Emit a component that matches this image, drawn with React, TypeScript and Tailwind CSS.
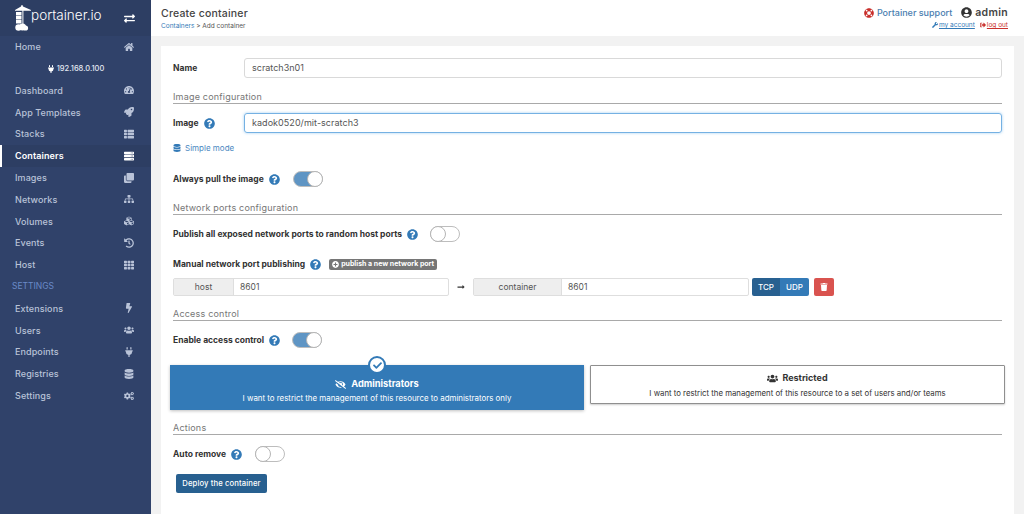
import type { ReactNode } from 'react';
import {
  FaBolt, FaCheck, FaClone, FaCogs, FaCubes, FaDatabase, FaEyeSlash, FaExchangeAlt, FaHistory, FaHome,
  FaLifeRing, FaLongArrowAltRight, FaPlug, FaPlusCircle, FaQuestionCircle, FaRocket, FaServer, FaSignOutAlt,
  FaSitemap, FaTachometerAlt, FaTh, FaThList, FaTrash, FaUserCircle, FaUsers, FaWrench,
} from 'react-icons/fa';

const font = 'font-["Inter","Liberation_Sans",sans-serif]';

function NavItem({ label, icon, active = false }: { label: string; icon: ReactNode; active?: boolean }) {
  return (
    <div
      className={`flex h-[21.8px] items-center justify-between pr-[16px] text-[9px] tracking-[0.1px] ${
        active ? 'border-l-2 border-white bg-[#2d3e63] pl-[13px] font-semibold text-white' : 'pl-[15px] font-medium text-[#b9c3d8]'
      }`}
    >
      <span>{label}</span>
      <span className="flex w-[12px] justify-center text-[10px]">{icon}</span>
    </div>
  );
}

function Sidebar() {
  return (
    <aside className="flex w-[151px] shrink-0 flex-col bg-[#30426a]">
      <div className="flex h-[36px] items-center justify-between bg-[#2d3e63] pl-[15px] pr-[16px] text-white">
        <div className="flex items-center">
          <svg width="16" height="26" viewBox="0 0 16 26" fill="#fff">
            <path d="M0 5 L6 1.5 L6.6 0 L7.4 0 L8 1.5 L16 5 L16 5.8 L8.4 5.8 L8.4 19 L7.4 19 L7.4 5.8 L0 5.8Z" />
            <rect x="1" y="7" width="5.5" height="3.5" />
            <rect x="1" y="11" width="5.5" height="3.5" />
            <rect x="1" y="15" width="5.5" height="3.5" />
            <circle cx="3.5" cy="22.5" r="3.2" />
            <circle cx="7.5" cy="22" r="3.6" />
            <circle cx="10.5" cy="23" r="2.6" />
          </svg>
          <span className="mb-[4px] text-[13.5px] font-light leading-none">portainer.io</span>
        </div>
        <FaExchangeAlt className="text-[11px]" />
      </div>
      <NavItem label="Home" icon={<FaHome />} />
      <div className="flex h-[21.8px] items-center justify-center text-[7.5px] font-medium text-[#e3e8f1]">
        <FaPlug className="mr-[2px] text-[8px] text-white" />
        192.168.0.100
      </div>
      <NavItem label="Dashboard" icon={<FaTachometerAlt />} />
      <NavItem label="App Templates" icon={<FaRocket />} />
      <NavItem label="Stacks" icon={<FaThList />} />
      <NavItem label="Containers" icon={<FaServer />} active />
      <NavItem label="Images" icon={<FaClone />} />
      <NavItem label="Networks" icon={<FaSitemap />} />
      <NavItem label="Volumes" icon={<FaCubes />} />
      <NavItem label="Events" icon={<FaHistory />} />
      <NavItem label="Host" icon={<FaTh />} />
      <div className="flex h-[21.8px] items-center pl-[12px] text-[8.5px] text-[#6a8ac8]">SETTINGS</div>
      <NavItem label="Extensions" icon={<FaBolt />} />
      <NavItem label="Users" icon={<FaUsers />} />
      <NavItem label="Endpoints" icon={<FaPlug />} />
      <NavItem label="Registries" icon={<FaDatabase />} />
      <NavItem label="Settings" icon={<FaCogs />} />
    </aside>
  );
}

function Help() {
  return <FaQuestionCircle className="text-[11px] text-[#337ab7]" />;
}

function SectionTitle({ children, className }: { children: ReactNode; className: string }) {
  return (
    <div className={`ml-[12px] h-[12px] border-b border-[#a9a9a9] text-[9px] leading-[10px] tracking-[0.2px] text-[#767676] ${className}`}>
      {children}
    </div>
  );
}

function Toggle({ on = false }: { on?: boolean }) {
  return (
    <span
      className={`relative block h-[16px] w-[30px] rounded-full border border-[#bdbdbd] ${
        on ? 'border-[#5f95c4] bg-[#5f95c4]' : 'bg-white'
      }`}
    >
      <span
        className={`absolute top-[-1px] h-[16px] w-[16px] rounded-full border border-[#b5b5b5] bg-white ${
          on ? 'right-[-1px]' : 'left-[-1px]'
        }`}
      />
    </span>
  );
}

function PortInput({ label, addon }: { label: string; addon: string }) {
  return (
    <div className={`flex h-[18px] w-[276px] rounded-[2px] border border-[#dedede] text-[8.5px] ${font}`}>
      <div className={`flex items-center justify-center border-r border-[#dedede] bg-[#eeeeee] text-[#555555] ${addon}`}>{label}</div>
      <div className="flex flex-1 items-center pl-[6px] text-[#555555]">8601</div>
    </div>
  );
}

export default function App() {
  return (
    <div className={`flex h-[514px] w-[1024px] overflow-hidden bg-[#f2f2f2] ${font}`}>
      <Sidebar />
      <div className="flex min-w-0 flex-1 flex-col">
        <header className="flex h-[36px] shrink-0 items-start justify-between bg-white pl-[10px] pr-[16px]">
          <div className="pt-[7px]">
            <div className="text-[10.5px] font-medium leading-[13px] tracking-[0.2px] text-[#444444]">Create container</div>
            <div className="mt-[2px] text-[6.5px] leading-[8px] text-[#555555]">
              <span className="text-[#337ab7]">Containers</span> &gt; Add container
            </div>
          </div>
          <div className="flex flex-col items-end pt-[6px]">
            <div className="flex items-center text-[9px] font-medium leading-[13px]">
              <FaLifeRing className="mr-[3px] text-[10px] text-[#c9302c]" />
              <span className="tracking-[0px] text-[#4b7eb0]">Portainer support</span>
              <FaUserCircle className="ml-[9px] mr-[3px] text-[11px] text-[#333333]" />
              <span className="text-[10.5px] font-semibold tracking-[0.3px] text-[#444444]">admin</span>
            </div>
            <div className="mt-[2px] flex items-center text-[6.5px] leading-[8px]">
              <FaWrench className="mr-[1px] text-[6px] text-[#337ab7]" />
              <span className="text-[#337ab7] underline">my account</span>
              <FaSignOutAlt className="ml-[5px] mr-[1px] text-[6px] text-[#c9302c]" />
              <span className="text-[#c9302c] underline">log out</span>
            </div>
          </div>
        </header>
        <main className="mx-[10px] mt-[10px] flex-1 bg-white pr-[12px] text-[#333333]">
          <div className="ml-[12px] mt-[12px] flex h-[20px] items-center">
            <span className="w-[71px] text-[8.5px] font-bold">Name</span>
            <div className="flex h-[20px] flex-1 items-center rounded-[3px] border border-[#d9d9d9] pl-[7px] text-[9px] text-[#555555]">
              scratch3n01
            </div>
          </div>
          <SectionTitle className="mt-[14px]">Image configuration</SectionTitle>
          <div className="ml-[12px] mt-[9px] flex h-[20px] items-center">
            <span className="flex w-[71px] items-center gap-[5px] text-[8.5px] font-bold">
              Image <Help />
            </span>
            <div className="flex h-[20px] flex-1 items-center rounded-[3px] border border-[#75b1e3] pl-[7px] text-[9px] tracking-[0.05px] text-[#555555] shadow-[0_0_3px_rgba(102,175,233,0.6)]">
              kadok0520/mit-scratch3
            </div>
          </div>
          <div className="ml-[12px] mt-[10px] flex h-[10px] items-center text-[8px] text-[#4b88bf]">
            <FaDatabase className="mr-[4px] text-[8px] text-[#337ab7]" />
            Simple mode
          </div>
          <div className="ml-[12px] mt-[18px] flex h-[16px] items-center text-[8.5px] font-bold">
            Always pull the image
            <span className="ml-[5px] mr-[13px]"><Help /></span>
            <Toggle on />
          </div>
          <SectionTitle className="mt-[16px]">Network ports configuration</SectionTitle>
          <div className="ml-[12px] mt-[11px] flex h-[16px] items-center text-[8.5px] font-bold">
            Publish all exposed network ports to random host ports
            <span className="ml-[5px] mr-[12px]"><Help /></span>
            <Toggle />
          </div>
          <div className="ml-[12px] mt-[16px] flex h-[12px] items-center text-[8.5px] font-bold">
            Manual network port publishing
            <span className="ml-[5px] mr-[8px]"><Help /></span>
            <span className="flex h-[11px] items-center rounded-[2px] bg-[#767676] px-[3px] text-[7px] font-bold text-white">
              <FaPlusCircle className="mr-[2px] text-[7px]" />
              publish a new network port
            </span>
          </div>
          <div className="ml-[12px] mt-[8px] flex h-[18px] items-center">
            <PortInput label="host" addon="w-[60px]" />
            <span className="flex w-[24px] justify-center text-[8px] text-[#333333]"><FaLongArrowAltRight /></span>
            <PortInput label="container" addon="w-[88px]" />
            <div className="ml-[3px] flex h-[18px] text-[8px] font-medium text-white">
              <span className="flex w-[28px] items-center justify-center rounded-l-[2px] bg-[#286090]">TCP</span>
              <span className="flex w-[29px] items-center justify-center rounded-r-[2px] bg-[#337ab7]">UDP</span>
            </div>
            <span className="ml-[5px] flex h-[18px] w-[20px] items-center justify-center rounded-[2px] bg-[#d9534f] text-[8px] text-white">
              <FaTrash />
            </span>
          </div>
          <SectionTitle className="mt-[13px]">Access control</SectionTitle>
          <div className="ml-[12px] mt-[11px] flex h-[16px] items-center text-[8.5px] font-bold">
            Enable access control
            <span className="ml-[5px] mr-[12px]"><Help /></span>
            <Toggle on />
          </div>
          <div className="ml-[9px] mt-[17px] flex items-start gap-[6px]">
            <div className="relative flex h-[45px] w-[414px] shrink-0 flex-col items-center justify-end bg-[#337ab7] pb-[7px] text-white shadow-[0_1px_3px_rgba(0,0,0,0.25)]">
              <span className="absolute left-[198px] top-[-9px] flex h-[18px] w-[18px] items-center justify-center rounded-full border-2 border-[#337ab7] bg-white text-[9px] text-[#337ab7]">
                <FaCheck />
              </span>
              <div className="flex items-center text-[9.3px] font-bold leading-[12px]">
                <FaEyeSlash className="mr-[5px] text-[11px]" />
                Administrators
              </div>
              <div className="mt-[3px] text-[7.9px] leading-[10px]">I want to restrict the management of this resource to administrators only</div>
            </div>
            <div className="flex h-[39px] w-[415px] shrink-0 flex-col items-center justify-end rounded-[1px] border border-[#8f8f8f] bg-white pb-[5px] text-[#333333] shadow-[0_1px_2px_rgba(0,0,0,0.2)]">
              <div className="flex items-center text-[9px] font-bold leading-[12px]">
                <FaUsers className="mr-[4px] text-[11px]" />
                Restricted
              </div>
              <div className="mt-[4px] text-[7.8px] leading-[10px]">I want to restrict the management of this resource to a set of users and/or teams</div>
            </div>
          </div>
          <SectionTitle className="mt-[13px]">Actions</SectionTitle>
          <div className="ml-[12px] mt-[11px] flex h-[16px] items-center text-[8.5px] font-bold">
            Auto remove
            <span className="ml-[5px] mr-[13px]"><Help /></span>
            <Toggle />
          </div>
          <button className="ml-[15px] mt-[12px] flex h-[19px] w-[91px] items-center justify-center rounded-[2px] bg-[#286090] text-[7.7px] font-medium tracking-[0.1px] text-white">
            Deploy the container
          </button>
        </main>
      </div>
    </div>
  );
}
